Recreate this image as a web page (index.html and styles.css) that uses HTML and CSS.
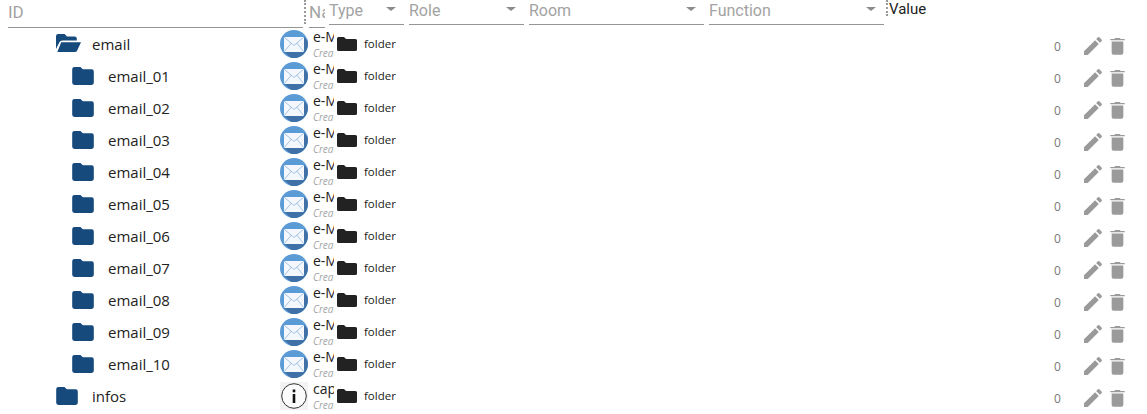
FILE: index.html
```html
<!DOCTYPE html>
<html lang="en">
<head>
  <meta charset="UTF-8">
  <title>Objects</title>
  <link rel="stylesheet" href="styles.css">
</head>
<body>

  <svg class="defs" width="0" height="0">
    <symbol id="folder" viewBox="0 0 24 20">
      <path d="M2.4 0h6.8l2.6 2.6h9.8a2.4 2.4 0 0 1 2.4 2.4v12.600a2.4 2.4 0 0 1-2.4 2.4H2.4A2.4 2.4 0 0 1 0 17.600V2.4A2.4 2.4 0 0 1 2.4 0z"/>
    </symbol>
    <symbol id="folder-flat" viewBox="0 0 20 14">
      <path d="M1.500 0h5.500l2 2h9.500A1.500 1.500 0 0 1 20 3.500v9A1.500 1.500 0 0 1 18.500 14h-17A1.500 1.500 0 0 1 0 12.500v-11A1.500 1.500 0 0 1 1.500 0z"/>
    </symbol>
    <symbol id="folder-open" viewBox="0 0 25 18">
      <path d="M0 15V2.200A2.200 2.200 0 0 1 2.200 0h6.400l2.400 2.400h7.600A2.200 2.200 0 0 1 20.800 4.600V6.500H6.500A3.500 3.500 0 0 0 3.300 8.500z"/>
      <path d="M5.200 8.200H25l-3.800 8.200A2.600 2.600 0 0 1 18.800 18H1.300z"/>
    </symbol>
    <symbol id="mail" viewBox="0 0 28 28">
      <circle cx="14" cy="14" r="14" fill="#5b9bd5"/>
      <path d="M4 22L24 7l3.600 4A14 14 0 0 1 11 27.700z" fill="#3f70a6"/>
      <rect x="4" y="7" width="20" height="15" fill="#f4f8fc"/>
      <path d="M4 7l10 8.500L24 7M4 22l7.300-9M24 22l-7.300-9" fill="none" stroke="#8fb5da" stroke-width="0.800"/>
    </symbol>
    <symbol id="info" viewBox="0 0 28 28">
      <rect width="28" height="28" fill="#f3f3f3"/>
      <circle cx="14" cy="14" r="12.300" fill="#fbfbfb" stroke="#333" stroke-width="1"/>
      <rect x="12.700" y="12" width="2.600" height="9" fill="#111"/>
      <rect x="12.700" y="7.500" width="2.600" height="2.800" fill="#111"/>
    </symbol>
    <symbol id="pencil" viewBox="0 0 24 24">
      <path d="M3 17.250V21h3.750L17.810 9.940l-3.750-3.750zM20.710 7.040a1 1 0 0 0 0-1.410l-2.340-2.340a1 1 0 0 0-1.410 0l-1.830 1.830 3.750 3.750z"/>
    </symbol>
    <symbol id="trash" viewBox="0 0 16 20">
      <path d="M1.500 5h13v12.500a2.300 2.300 0 0 1-2.300 2.300H3.800a2.300 2.300 0 0 1-2.300-2.300zM0 2.300h4.500L5.500 1h5l1 1.300H16v1.400H0z"/>
    </symbol>
  </svg>

  <!-- Filter header -->
  <div class="header">
    <div class="filter filter-id"><span>ID</span></div>
    <div class="splitter"></div>
    <div class="filter filter-name"><span>Na</span></div>
    <div class="filter select select-type"><span>Type</span><i class="arrow"></i></div>
    <div class="filter select select-role"><span>Role</span><i class="arrow"></i></div>
    <div class="filter select select-wide"><span>Room</span><i class="arrow"></i></div>
    <div class="filter select select-wide"><span>Function</span><i class="arrow"></i></div>
    <div class="splitter splitter-value"></div>
    <div class="value-title">Value</div>
  </div>

  <!-- Object rows -->
  <div class="rows">
    <div class="row">
      <div class="cell-id level-1"><svg class="icon-open"><use href="#folder-open"/></svg><span>email</span></div>
      <div class="cell-name"><svg class="obj-icon"><use href="#mail"/></svg><div class="name-text"><p>e-Mail</p><small>Created by</small></div></div>
      <div class="cell-type"><svg class="type-icon"><use href="#folder-flat"/></svg><span>folder</span></div>
      <div class="cell-value">0</div>
      <div class="cell-actions"><svg class="pencil"><use href="#pencil"/></svg><svg class="trash"><use href="#trash"/></svg></div>
    </div>
    <div class="row">
      <div class="cell-id level-2"><svg class="icon-folder"><use href="#folder"/></svg><span>email_01</span></div>
      <div class="cell-name"><svg class="obj-icon"><use href="#mail"/></svg><div class="name-text"><p>e-Mail</p><small>Created by</small></div></div>
      <div class="cell-type"><svg class="type-icon"><use href="#folder-flat"/></svg><span>folder</span></div>
      <div class="cell-value">0</div>
      <div class="cell-actions"><svg class="pencil"><use href="#pencil"/></svg><svg class="trash"><use href="#trash"/></svg></div>
    </div>
    <div class="row">
      <div class="cell-id level-2"><svg class="icon-folder"><use href="#folder"/></svg><span>email_02</span></div>
      <div class="cell-name"><svg class="obj-icon"><use href="#mail"/></svg><div class="name-text"><p>e-Mail</p><small>Created by</small></div></div>
      <div class="cell-type"><svg class="type-icon"><use href="#folder-flat"/></svg><span>folder</span></div>
      <div class="cell-value">0</div>
      <div class="cell-actions"><svg class="pencil"><use href="#pencil"/></svg><svg class="trash"><use href="#trash"/></svg></div>
    </div>
    <div class="row">
      <div class="cell-id level-2"><svg class="icon-folder"><use href="#folder"/></svg><span>email_03</span></div>
      <div class="cell-name"><svg class="obj-icon"><use href="#mail"/></svg><div class="name-text"><p>e-Mail</p><small>Created by</small></div></div>
      <div class="cell-type"><svg class="type-icon"><use href="#folder-flat"/></svg><span>folder</span></div>
      <div class="cell-value">0</div>
      <div class="cell-actions"><svg class="pencil"><use href="#pencil"/></svg><svg class="trash"><use href="#trash"/></svg></div>
    </div>
    <div class="row">
      <div class="cell-id level-2"><svg class="icon-folder"><use href="#folder"/></svg><span>email_04</span></div>
      <div class="cell-name"><svg class="obj-icon"><use href="#mail"/></svg><div class="name-text"><p>e-Mail</p><small>Created by</small></div></div>
      <div class="cell-type"><svg class="type-icon"><use href="#folder-flat"/></svg><span>folder</span></div>
      <div class="cell-value">0</div>
      <div class="cell-actions"><svg class="pencil"><use href="#pencil"/></svg><svg class="trash"><use href="#trash"/></svg></div>
    </div>
    <div class="row">
      <div class="cell-id level-2"><svg class="icon-folder"><use href="#folder"/></svg><span>email_05</span></div>
      <div class="cell-name"><svg class="obj-icon"><use href="#mail"/></svg><div class="name-text"><p>e-Mail</p><small>Created by</small></div></div>
      <div class="cell-type"><svg class="type-icon"><use href="#folder-flat"/></svg><span>folder</span></div>
      <div class="cell-value">0</div>
      <div class="cell-actions"><svg class="pencil"><use href="#pencil"/></svg><svg class="trash"><use href="#trash"/></svg></div>
    </div>
    <div class="row">
      <div class="cell-id level-2"><svg class="icon-folder"><use href="#folder"/></svg><span>email_06</span></div>
      <div class="cell-name"><svg class="obj-icon"><use href="#mail"/></svg><div class="name-text"><p>e-Mail</p><small>Created by</small></div></div>
      <div class="cell-type"><svg class="type-icon"><use href="#folder-flat"/></svg><span>folder</span></div>
      <div class="cell-value">0</div>
      <div class="cell-actions"><svg class="pencil"><use href="#pencil"/></svg><svg class="trash"><use href="#trash"/></svg></div>
    </div>
    <div class="row">
      <div class="cell-id level-2"><svg class="icon-folder"><use href="#folder"/></svg><span>email_07</span></div>
      <div class="cell-name"><svg class="obj-icon"><use href="#mail"/></svg><div class="name-text"><p>e-Mail</p><small>Created by</small></div></div>
      <div class="cell-type"><svg class="type-icon"><use href="#folder-flat"/></svg><span>folder</span></div>
      <div class="cell-value">0</div>
      <div class="cell-actions"><svg class="pencil"><use href="#pencil"/></svg><svg class="trash"><use href="#trash"/></svg></div>
    </div>
    <div class="row">
      <div class="cell-id level-2"><svg class="icon-folder"><use href="#folder"/></svg><span>email_08</span></div>
      <div class="cell-name"><svg class="obj-icon"><use href="#mail"/></svg><div class="name-text"><p>e-Mail</p><small>Created by</small></div></div>
      <div class="cell-type"><svg class="type-icon"><use href="#folder-flat"/></svg><span>folder</span></div>
      <div class="cell-value">0</div>
      <div class="cell-actions"><svg class="pencil"><use href="#pencil"/></svg><svg class="trash"><use href="#trash"/></svg></div>
    </div>
    <div class="row">
      <div class="cell-id level-2"><svg class="icon-folder"><use href="#folder"/></svg><span>email_09</span></div>
      <div class="cell-name"><svg class="obj-icon"><use href="#mail"/></svg><div class="name-text"><p>e-Mail</p><small>Created by</small></div></div>
      <div class="cell-type"><svg class="type-icon"><use href="#folder-flat"/></svg><span>folder</span></div>
      <div class="cell-value">0</div>
      <div class="cell-actions"><svg class="pencil"><use href="#pencil"/></svg><svg class="trash"><use href="#trash"/></svg></div>
    </div>
    <div class="row">
      <div class="cell-id level-2"><svg class="icon-folder"><use href="#folder"/></svg><span>email_10</span></div>
      <div class="cell-name"><svg class="obj-icon"><use href="#mail"/></svg><div class="name-text"><p>e-Mail</p><small>Created by</small></div></div>
      <div class="cell-type"><svg class="type-icon"><use href="#folder-flat"/></svg><span>folder</span></div>
      <div class="cell-value">0</div>
      <div class="cell-actions"><svg class="pencil"><use href="#pencil"/></svg><svg class="trash"><use href="#trash"/></svg></div>
    </div>
    <div class="row">
      <div class="cell-id level-1"><svg class="icon-folder"><use href="#folder"/></svg><span>infos</span></div>
      <div class="cell-name"><svg class="obj-icon"><use href="#info"/></svg><div class="name-text"><p>capabilities</p><small>Created by</small></div></div>
      <div class="cell-type"><svg class="type-icon"><use href="#folder-flat"/></svg><span>folder</span></div>
      <div class="cell-value">0</div>
      <div class="cell-actions"><svg class="pencil"><use href="#pencil"/></svg><svg class="trash"><use href="#trash"/></svg></div>
    </div>
  </div>

</body>
</html>
```

FILE: styles.css
```css
body {
  margin: 0;
  background-color: #fff;
  color: #222;
  font-family: 'Open Sans', 'Noto Sans', sans-serif;
  overflow: hidden;
}

p {
  margin: 0;
}

.defs {
  display: block;
  height: 0;
}

/* Header */
.header {
  display: flex;
  height: 28px;
  padding-left: 8px;
  font-family: Roboto, sans-serif;
  font-size: 16px;
  color: #a3a3a3;
}

.filter {
  box-sizing: border-box;
  height: 28px;
  padding-top: 2px;
  line-height: 20px;
  font-size: 17px;
  border-bottom: 1px solid #949494;
  overflow: hidden;
  white-space: nowrap;
}

.filter-id {
  width: 295px;
}

.filter-name {
  width: 16px;
  margin: 0 4px 0 3px;
}

.select {
  display: flex;
  justify-content: space-between;
  align-items: center;
  height: 25px;
  padding: 0 0 2px;
  margin-right: 5px;
  font-size: 16px;
}

.select-type {
  width: 75px;
}

.select-role {
  width: 115px;
}

.select-wide {
  width: 175px;
}

.arrow {
  width: 0;
  height: 0;
  margin: 0 8px 5px 0;
  border-left: 5px solid transparent;
  border-right: 5px solid transparent;
  border-top: 4px solid #8c8c8c;
}

.splitter {
  width: 0;
  height: 24px;
  margin-left: 1px;
  border-left: 2px dotted #999;
}

.splitter-value {
  height: 16px;
  margin-left: -3px;
}

.value-title {
  margin-left: 1px;
  line-height: 18px;
  font-size: 15px;
  color: #222;
}

/* Rows */
.row {
  display: flex;
  align-items: center;
  height: 32px;
}

.cell-id {
  display: flex;
  align-items: center;
  box-sizing: border-box;
  width: 280px;
  font-size: 15px;
  line-height: 20px;
}

.level-1 {
  padding-left: 56px;
}

.level-2 {
  padding-left: 72px;
}

.icon-folder {
  width: 22px;
  height: 18px;
  margin: 0 14px 1px 0;
  fill: #174a7c;
}

.icon-open {
  width: 25px;
  height: 18px;
  margin: 0 11px 3px 0;
  fill: #174a7c;
}

.cell-name {
  display: flex;
  align-items: center;
  width: 56px;
  height: 32px;
  overflow: hidden;
}

.obj-icon {
  flex: none;
  width: 28px;
  height: 28px;
  margin-right: 5px;
}

.name-text {
  width: 21px;
  padding-top: 2px;
  overflow: hidden;
  white-space: nowrap;
}

.name-text p {
  font-size: 14px;
  line-height: 16px;
}

.name-text small {
  display: block;
  font-size: 10px;
  line-height: 16px;
  font-style: italic;
  color: #a5a5a5;
}

.cell-type {
  display: flex;
  align-items: center;
  width: 718px;
  padding-left: 1px;
  box-sizing: border-box;
  font-size: 11.5px;
}

.cell-type span {
  margin-bottom: 2px;
}

.type-icon {
  width: 20px;
  height: 14px;
  margin-right: 7px;
  fill: #222;
}

.cell-value {
  width: 27px;
  padding-top: 5px;
  font-size: 12px;
  color: #777;
}

.cell-actions {
  display: flex;
  align-items: center;
  gap: 5px;
  padding-top: 4px;
}

.pencil {
  width: 24px;
  height: 24px;
  fill: #9a9a9a;
}

.trash {
  width: 15px;
  height: 18px;
  fill: #9a9a9a;
}
```
